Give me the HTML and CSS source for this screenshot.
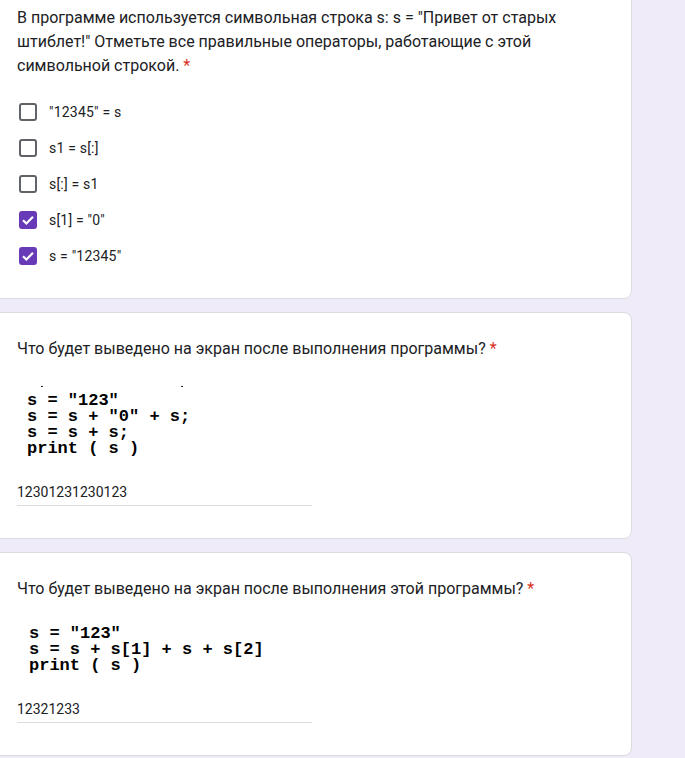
FILE: index.html
```html
<!DOCTYPE html>
<html lang="ru">
<head>
<meta charset="utf-8">
<title>Форма</title>
<link rel="stylesheet" href="styles.css">
</head>
<body>
<main class="page">
  <section class="card card-first">
    <div class="title">В программе используется символьная строка s: s = "Привет от старых штиблет!" Отметьте все правильные операторы, работающие с этой символьной строкой. <span class="req">*</span></div>
    <div class="options">
      <label class="opt"><span class="box"></span><span class="opt-text">"12345" = s</span></label>
      <label class="opt"><span class="box"></span><span class="opt-text">s1 = s[:]</span></label>
      <label class="opt"><span class="box"></span><span class="opt-text">s[:] = s1</span></label>
      <label class="opt"><span class="box checked"><svg viewBox="0 0 18 18" width="18" height="18"><path d="M4 9.2 L7.4 12.5 L14 5.8" fill="none" stroke="#fff" stroke-width="2.2"/></svg></span><span class="opt-text">s[1] = "0"</span></label>
      <label class="opt"><span class="box checked"><svg viewBox="0 0 18 18" width="18" height="18"><path d="M4 9.2 L7.4 12.5 L14 5.8" fill="none" stroke="#fff" stroke-width="2.2"/></svg></span><span class="opt-text">s = "12345"</span></label>
    </div>
  </section>

  <section class="card">
    <div class="title">Что будет выведено на экран после выполнения программы? <span class="req">*</span></div>
    <div class="code code-a">
      <div class="ticks"><span class="tick"></span><span class="tick tick-2"></span></div>
      <pre class="code-text">s = "123"
s = s + "0" + s;
s = s + s;
print ( s )</pre>
    </div>
    <div class="answer">12301231230123</div>
  </section>

  <section class="card">
    <div class="title">Что будет выведено на экран после выполнения этой программы? <span class="req">*</span></div>
    <div class="code code-b">
      <pre class="code-text">s = "123"
s = s + s[1] + s + s[2]
print ( s )</pre>
    </div>
    <div class="answer">12321233</div>
  </section>
</main>
</body>
</html>
```
FILE: styles.css
```css
html, body {
  margin: 0;
  padding: 0;
}
body {
  background: #f0ebf8;
  font-family: Roboto, "Liberation Sans", Arial, sans-serif;
  color: #202124;
  overflow: hidden;
}
.page {
  width: 640px;
  margin-left: -8px;
  display: flex;
  flex-direction: column;
  gap: 13px;
}
.card {
  background: #fff;
  border: 1px solid #dadce0;
  border-radius: 8px;
  padding: 24px 24px 32px 24px;
}
.card-first {
  margin-top: -19px;
  padding-bottom: 24px;
}
.title {
  font-size: 16px;
  line-height: 24px;
  letter-spacing: 0;
  color: #202124;
}
.req {
  color: #d93025;
}
.options {
  margin-top: 16px;
  display: flex;
  flex-direction: column;
}
.opt {
  height: 36px;
  display: flex;
  align-items: center;
  gap: 12px;
}
.box {
  width: 20px;
  height: 20px;
  display: flex;
  align-items: center;
  justify-content: center;
}
.box::before {
  content: "";
  width: 14px;
  height: 14px;
  border: 2px solid #5f6368;
  border-radius: 3px;
  margin-left: 1px;
}
.box.checked::before {
  display: none;
}
.box.checked svg {
  background: #673ab7;
  border-radius: 3px;
  margin-left: 1px;
}
.opt-text {
  font-size: 14px;
  letter-spacing: 0.2px;
  color: #202124;
}
.code {
  margin-top: 16px;
}
.code-a {
  padding-left: 10px;
}
.code-b {
  padding-top: 9px;
  padding-left: 12px;
}
.ticks {
  height: 16px;
  position: relative;
}
.tick {
  position: absolute;
  top: 9px;
  left: 14px;
  width: 2px;
  height: 1px;
  background: #222;
}
.tick-2 {
  left: 154px;
}
.code-text {
  margin: 0;
  font-family: "Liberation Mono", "Courier New", monospace;
  font-weight: bold;
  font-size: 17px;
  line-height: 16px;
  color: #000;
}
.answer {
  margin-top: 25px;
  width: 295px;
  font-size: 14px;
  line-height: 20px;
  padding-bottom: 3px;
  border-bottom: 1px solid #dadce0;
  color: #202124;
}
```
